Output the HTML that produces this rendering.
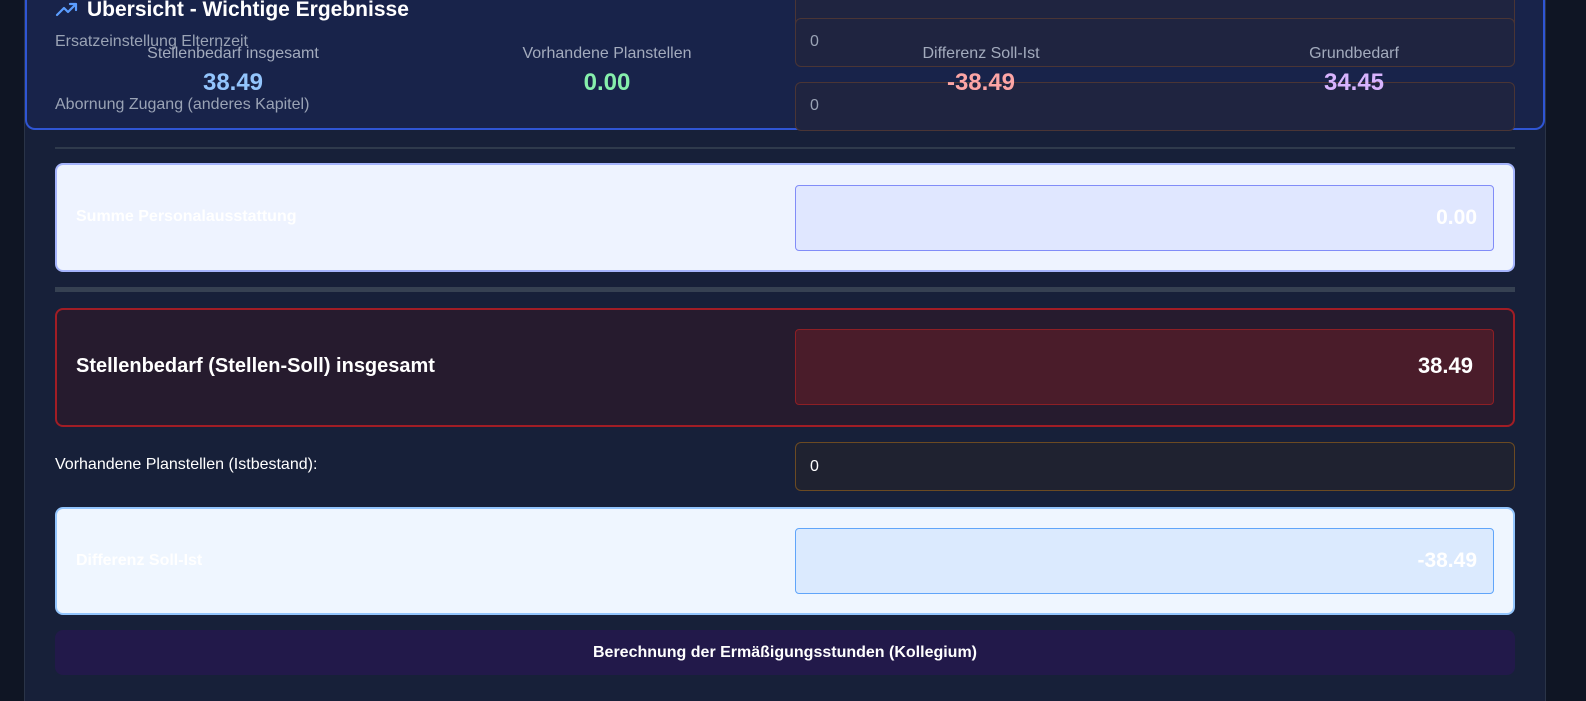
<!DOCTYPE html>
<html><head><meta charset="utf-8"><style>
*{box-sizing:border-box;margin:0;padding:0}
body{width:1586px;height:701px;overflow:hidden;background:#0f1524;font-family:"Liberation Sans",sans-serif;position:relative}
.cont{position:absolute;left:24px;top:0;width:1522px;height:701px;background:#172039;border-left:1px solid #2a3448;border-right:1px solid #2a3448}
.abs{position:absolute}
.lbl{color:#9aa3b5;font-size:16px}
.inp{position:absolute;left:795px;width:720px;height:49px;border:1px solid #4a3535;border-radius:6px;background:#1f2440;color:#9aa3b5;font-size:16px;padding:14px 14px}
.card{position:absolute;left:25px;top:-20px;width:1520px;height:150px;border:2px solid #2f55d4;border-top:none;border-radius:0 0 10px 10px;background:#18234a}
.stat{position:absolute;text-align:center;width:300px}
.stat .t{color:#a3abbd;font-size:16px}
.stat .v{font-size:24px;font-weight:bold;margin-top:6px}
</style></head><body>
<div class="cont"></div>
<div class="card"></div>
<div class="inp" style="top:-20px;height:50px"></div>
<div class="abs lbl" style="left:55px;top:33px">Ersatzeinstellung Elternzeit</div>
<div class="abs lbl" style="left:55px;top:96px">Abornung Zugang (anderes Kapitel)</div>
<div class="inp" style="top:18px">0</div>
<div class="inp" style="top:82px">0</div>
<div class="abs" style="left:55px;top:-2px;color:#fff;font-size:21px;font-weight:bold"><svg width="24" height="18" viewBox="0 0 24 18" style="vertical-align:-2px;margin-right:8px"><path d="M2 15 L9 8 L13 12 L21 4 M15 4 H21 V10" fill="none" stroke="#5b9dff" stroke-width="2.2" stroke-linecap="round" stroke-linejoin="round"/></svg>Übersicht - Wichtige Ergebnisse</div>
<div class="stat" style="left:83px;top:45px"><div class="t">Stellenbedarf insgesamt</div><div class="v" style="color:#93c5fd">38.49</div></div>
<div class="stat" style="left:457px;top:45px"><div class="t">Vorhandene Planstellen</div><div class="v" style="color:#86efac">0.00</div></div>
<div class="stat" style="left:831px;top:45px"><div class="t">Differenz Soll-Ist</div><div class="v" style="color:#fca5a5">-38.49</div></div>
<div class="stat" style="left:1204px;top:45px"><div class="t">Grundbedarf</div><div class="v" style="color:#d8b4fe">34.45</div></div>
<div class="abs" style="left:55px;top:147px;width:1460px;height:2px;background:#2f3a4c"></div>
<div class="abs" style="left:55px;top:163px;width:1460px;height:109px;background:#eef3ff;border:2px solid #a5b4fc;border-radius:8px"></div>
<div class="abs" style="left:76px;top:208px;color:#fff;font-size:16px;font-weight:bold">Summe Personalausstattung</div>
<div class="abs" style="left:795px;top:185px;width:699px;height:66px;background:#e0e7ff;border:1px solid #818cf8;border-radius:4px;color:#fff;font-size:21px;font-weight:bold;text-align:right;padding:20px 16px">0.00</div>
<div class="abs" style="left:55px;top:287px;width:1460px;height:5px;background:#364152"></div>
<div class="abs" style="left:55px;top:308px;width:1460px;height:119px;background:#261b2e;border:2px solid #a11d25;border-radius:8px"></div>
<div class="abs" style="left:76px;top:355px;color:#fff;font-size:20px;font-weight:bold">Stellenbedarf (Stellen-Soll) insgesamt</div>
<div class="abs" style="left:795px;top:329px;width:699px;height:76px;background:#4a1c2a;border:1px solid #8d1f25;border-radius:4px;color:#fff;font-size:22px;font-weight:bold;text-align:right;padding:23px 20px">38.49</div>
<div class="abs" style="left:55px;top:456px;color:#fff;font-size:16px">Vorhandene Planstellen (Istbestand):</div>
<div class="abs" style="left:795px;top:442px;width:720px;height:49px;background:#1f2230;border:1px solid #6b4a22;border-radius:6px;color:#fff;font-size:16px;padding:15px 14px">0</div>
<div class="abs" style="left:55px;top:507px;width:1460px;height:108px;background:#eff6ff;border:2px solid #93c5fd;border-radius:8px"></div>
<div class="abs" style="left:76px;top:552px;color:#fff;font-size:16px;font-weight:bold">Differenz Soll-Ist</div>
<div class="abs" style="left:795px;top:528px;width:699px;height:66px;background:#dbeafe;border:1px solid #60a5fa;border-radius:4px;color:#fff;font-size:21px;font-weight:bold;text-align:right;padding:20px 16px">-38.49</div>
<div class="abs" style="left:55px;top:630px;width:1460px;height:45px;background:#22194a;border-radius:8px;color:#fff;font-size:16px;font-weight:bold;text-align:center;line-height:45px">Berechnung der Ermäßigungsstunden (Kollegium)</div>
</body></html>
